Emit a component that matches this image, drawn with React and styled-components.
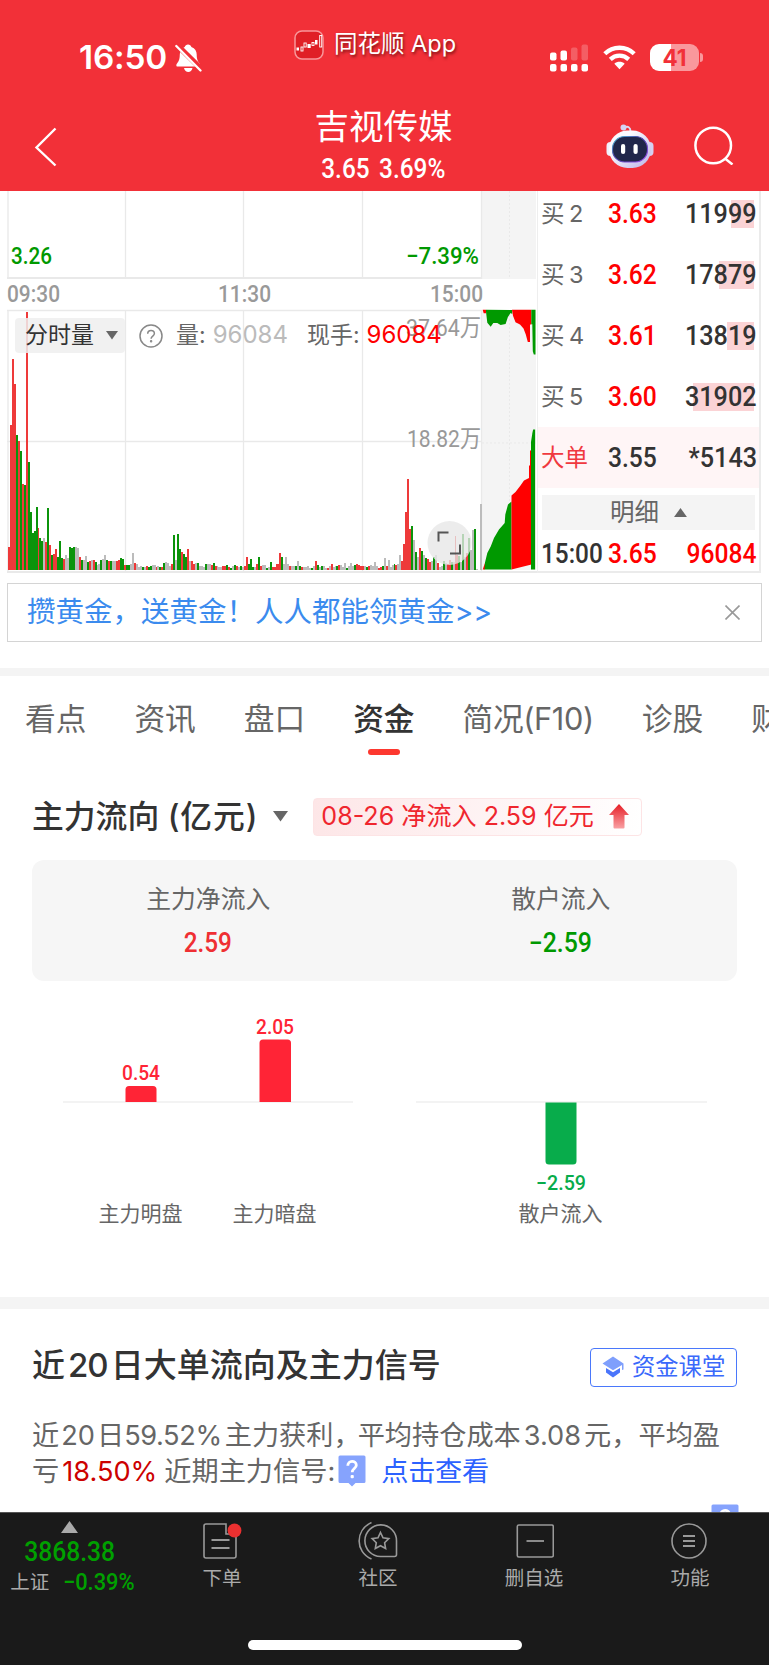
import React from 'react';
import styled, { createGlobalStyle } from 'styled-components';

const GlobalStyle = createGlobalStyle`
  * {
    box-sizing: border-box;
  }

  body {
    margin: 0;
    background: #fff;
    font-family: Inter, 'Noto Sans CJK SC', sans-serif;
    line-height: 1.2;
    color: #333;
  }

  svg {
    display: block;
    flex: none;
  }
`;

const Page = styled.div`
  width: 769px;
  height: 1665px;
  overflow: hidden;
  display: flex;
  flex-direction: column;
  background: #fff;
  white-space: nowrap;
`;

/* condensed digits used for every quote number */
const Num = styled.span`
  display: inline-block;
  margin-top: ${(p) => p.$top || 0}px;
  font-family: Roboto, sans-serif;
  font-weight: 500;
  font-size: ${(p) => p.$size || 27}px;
  line-height: 1;
  word-spacing: ${(p) => p.$gap || 0}px;
  color: ${(p) => p.$color || 'inherit'};
  transform: scaleX(${(p) => p.$stretch || 0.9});
  transform-origin: ${(p) => p.$origin || 'center'};
`;

/* header */

const Header = styled.header`
  height: 191px;
  flex: none;
  background: #f23038;
  color: #fff;
`;

const StatusBar = styled.div`
  display: grid;
  grid-template-columns: 294px 256px 1fr;
  height: 100px;
`;

const Clock = styled.div`
  display: flex;
  align-items: center;
  gap: 8px;
  height: 116px;
  padding-left: 79px;
  font-size: 33.3px;
  font-weight: 600;
  letter-spacing: -0.2px;
`;

const AppTag = styled.div`
  display: flex;
  align-items: center;
  gap: 10px;
  height: 89px;
  font-size: 23.5px;
  text-shadow: 1px 2px 3px rgba(60, 0, 0, 0.65);
`;

const Signals = styled.div`
  display: flex;
  align-items: center;
  height: 115px;
`;

const Battery = styled.div`
  display: flex;
  align-items: center;
  justify-content: center;
  width: 49px;
  height: 27px;
  margin-left: 14px;
  border-radius: 9px;
  background: linear-gradient(to right, #fff 42%, #f9989c 42%);
  color: #f23038;
  font-size: 22.5px;
  font-weight: 700;
`;

const BatteryTip = styled.div`
  width: 3px;
  height: 9px;
  margin-left: 1px;
  border-radius: 0 3px 3px 0;
  background: #f9989c;
`;

const NavBar = styled.div`
  display: grid;
  grid-template-columns: 259px 249px 1fr;
  height: 91px;
`;

const BackSlot = styled.div`
  padding: 27px 0 0 34px;
`;

const TitleBlock = styled.div`
  display: flex;
  flex-direction: column;
  align-items: center;
`;

const StockName = styled.div`
  height: 55px;
  line-height: 54px;
  font-size: 34.5px;
`;

const NavActions = styled.div`
  display: flex;
  padding: 23px 0 0 98px;
  gap: 40px;
`;

/* quote */

const Quote = styled.section`
  display: flex;
  height: 382px;
  flex: none;
  padding-left: 7px;
  overflow: hidden;
`;

const ChartStack = styled.div`
  width: 530px;
  position: relative;
`;

const IndicatorBar = styled.div`
  position: absolute;
  top: 127px;
  left: 8px;
  display: flex;
  align-items: center;
  height: 35px;
  font-size: 23px;
  color: #666;
`;

const IndicatorPicker = styled.div`
  display: flex;
  align-items: center;
  gap: 12px;
  width: 110px;
  height: 35px;
  padding-left: 10px;
  margin-right: 14px;
  border-radius: 4px;
  background: rgba(238, 238, 238, 0.85);
  color: #333;
`;

const Reading = styled.span`
  margin-left: ${(p) => p.$gap}px;
`;

const ReadingValue = styled.span`
  margin-left: 7px;
  font-size: 24px;
  color: ${(p) => p.$color};
`;

const OrderBook = styled.div`
  width: 224px;
  border-left: 1px solid #eee;
  border-right: 2px solid #ebebeb;
  border-bottom: 2px solid #ebebeb;
  display: flex;
  flex-direction: column;
  overflow: hidden;
`;

/* the list is scrolled a little, so its first row starts above the edge */
const OrderList = styled.div`
  flex: none;
  margin-top: -8px;
`;

const OrderRow = styled.div`
  display: grid;
  grid-template-columns: 67px 60px 1fr;
  align-items: center;
  height: ${(p) => p.$height || 61}px;
  padding: ${(p) => p.$top || 0}px 2px 0 3px;
  background: ${(p) => (p.$big ? '#fff5f6' : 'transparent')};
`;

const OrderLabel = styled.span`
  font-size: 23.5px;
  line-height: 30px;
  word-spacing: -2px;
  color: ${(p) => (p.$big ? '#f0393f' : '#666')};
`;

const VolumeCell = styled.span`
  display: flex;
  justify-content: flex-end;
  align-items: center;
  height: 28px;
  background: linear-gradient(#fbd3d5, #fbd3d5) no-repeat right 3px top 0 / ${(p) => p.$fill || 0}px 28px;
`;

const DetailToggle = styled.div`
  display: flex;
  flex: none;
  align-items: center;
  justify-content: center;
  gap: 15px;
  width: 213px;
  height: 35px;
  margin: 7px 0 0 4px;
  background: #f4f4f4;
  color: #666;
  font-size: 24.5px;
`;

const Banner = styled.div`
  display: flex;
  align-items: center;
  justify-content: space-between;
  flex: none;
  width: 755px;
  height: 59px;
  margin: 10px 0 0 7px;
  padding: 0 21px 0 19px;
  border: 1px solid #d4d4d4;
  color: #3b8bee;
  font-size: 28.5px;
`;

const Divider = styled.div`
  flex: none;
  height: ${(p) => p.$height}px;
  margin-top: ${(p) => p.$top}px;
  background: #f4f4f4;
`;

/* tabs */

const Tabs = styled.nav`
  display: flex;
  flex: none;
  gap: 48px;
  height: 84px;
  padding-left: 25px;
  overflow: hidden;
`;

const Tab = styled.div`
  display: flex;
  flex-direction: column;
  align-items: center;
  flex: none;
  line-height: 45px;
  padding-top: 20px;
  font-size: 30.7px;
  letter-spacing: ${(p) => p.$track || 0}px;
  font-weight: ${(p) => (p.$active ? 500 : 400)};
  color: ${(p) => (p.$active ? '#333' : '#666')};

  &::after {
    content: '';
    width: 32px;
    height: 6px;
    margin-top: 8px;
    border-radius: 3px;
    background: ${(p) => (p.$active ? '#fd382f' : 'transparent')};
  }
`;

/* capital flow */

const FlowSection = styled.section`
  flex: none;
  height: 537px;
  padding: 37px 32px 0;
`;

const FlowHead = styled.div`
  display: flex;
  align-items: center;
  height: 39px;
`;

const FlowTitle = styled.h2`
  margin: 0 15px 0 0;
  font-size: 31.8px;
  line-height: 40px;
  font-weight: 500;
  word-spacing: -1px;
`;

const FlowBadge = styled.div`
  display: flex;
  align-items: center;
  justify-content: space-between;
  width: 329px;
  height: 38px;
  margin-left: 25px;
  padding: 0 12px 0 7px;
  border: 1px solid #fde4e5;
  border-radius: 4px;
  background: linear-gradient(100deg, #fde6e7, #fff);
  color: #ef262e;
  font-size: 25.1px;
`;

const Summary = styled.div`
  display: grid;
  grid-template-columns: 1fr 1fr;
  height: 121px;
  margin: 24px 0 20px;
  border-radius: 12px;
  background: #f6f6f6;
`;

const SummaryItem = styled.div`
  display: flex;
  flex-direction: column;
  align-items: center;
  padding-top: 21px;
  gap: 13px;
  line-height: 36px;
  font-size: 24.8px;
  color: #666;
`;

/* signals */

const SignalSection = styled.section`
  flex: none;
  display: flex;
  flex-direction: column;
  height: 203px;
  padding: 38px 32px 0;
  overflow: hidden;
`;

const SignalHead = styled.div`
  display: flex;
  align-items: center;
  justify-content: space-between;
  height: 40px;
`;

const SignalTitle = styled.h2`
  margin: 0;
  padding-bottom: 4px;
  font-size: 33px;
  line-height: 40px;
  font-weight: 500;
`;

const Spaced = styled.span`
  margin: 0 ${(p) => p.$right || 0}px 0 ${(p) => p.$left || 0}px;
  letter-spacing: ${(p) => p.$track || 0}px;
  color: ${(p) => p.$color || 'inherit'};
`;

const LessonButton = styled.div`
  display: flex;
  align-items: center;
  gap: 8px;
  width: 147px;
  height: 39px;
  padding-left: 11px;
  border: 1.5px solid #4a78fb;
  border-radius: 4px;
  color: #3a69fb;
  font-size: 23.3px;
`;

const SignalText = styled.div`
  margin-top: 31px;
  color: #666;
  font-size: 27.2px;
  line-height: 35.5px;
`;

const SignalLine = styled.div`
  display: flex;
  align-items: center;
  height: 35.5px;
`;

const TipRow = styled.div`
  display: flex;
  justify-content: flex-end;
  margin: 15px -2px 0 0;
`;

/* bottom bar */

const BottomBar = styled.footer`
  flex: none;
  height: 153px;
  border-top: 1px solid #555;
  background: #1a1a1a;
  color: #aaa;
`;

const BottomItems = styled.div`
  display: grid;
  grid-template-columns: 144px repeat(4, 156px);
  height: 127px;
`;

const BottomItem = styled.div`
  display: flex;
  flex-direction: column;
  align-items: center;
  gap: 2px;
  padding-top: 8px;
  font-size: 19.5px;
  line-height: 32px;
`;

const IndexItem = styled.div`
  display: flex;
  flex-direction: column;
  align-items: center;
  width: 139px;
  padding-top: 8px;
  font-size: 19.5px;
`;

const IndexRow = styled.div`
  display: flex;
  align-items: center;
  gap: 12px;
  height: 28px;
  margin-top: 3px;
  padding-left: 8px;
`;

const HomeIndicator = styled.div`
  width: 274px;
  height: 10px;
  margin: 0 auto;
  border-radius: 5px;
  background: #fff;
`;

const GRID_X = [1, 118.5, 236.5, 355.5];

// one letter + height per minute: r = up, g = down, n = flat
const VOLUME =
  'r23 r145 r211 r186 g135 r129 g119 r86 g85 r258 g108 g58 g37 g39 g63 r42 g32 g29 n32 r28 ' +
  'g62 r25 g15 r16 r21 g13 g29 g12 r11 n15 n12 g23 g22 g23 n23 n22 r13 g10 n10 n14 ' +
  'g8 r9 n10 r10 g8 n5 n6 g10 n11 n15 g10 r9 g9 n9 n9 r9 r10 g12 g11 r5 ' +
  'g5 g5 n6 n17 r7 n6 n3 n4 g3 n3 r4 g3 g4 n5 n5 r3 n4 g3 r3 g7 ' +
  'n8 n7 n4 r6 g35 n10 g36 g21 r18 g16 g13 r21 n9 r9 r6 n7 g7 n4 n4 n3 ' +
  'g6 n6 n6 r5 g7 r4 n4 n3 n3 r4 r4 g5 r3 g2 n4 g5 r4 n3 g4 n3 ' +
  'r4 r13 g6 g11 g3 n3 r6 g13 r4 n5 n5 g2 n3 g8 r3 r3 r6 r6 r17 g13 ' +
  'n6 n13 n6 r4 n4 n4 g4 n9 g4 r3 n3 n3 n4 n2 g2 n4 r9 g5 n3 g4 ' +
  'n4 n2 r2 n4 r6 n3 n4 g4 r5 n5 n3 n7 g2 n4 n7 n4 g5 r6 r5 r4 ' +
  'r4 n4 g3 r4 n5 n4 n8 n4 r2 r3 g4 n12 r4 n10 n3 n5 g6 r5 n6 n15 ' +
  'r9 r26 r58 r91 r41 g44 n30 g18 n13 r22 g19 n15 g12 r11 r8 n9 g13 n15 r7 n3 ' +
  'n4 g9 n7 r6 r10 g8 n8 r34 r15 g14 n8 g36 n13 r17 g32 n20 n40 g41 n1 n0 n66';

const BARS = VOLUME.split(' ').map((s) => ({ kind: s[0], h: Number(s.slice(1)) }));
const BAR_COLORS = { r: '#ee3a3a', g: '#0b940b', n: '#bcbcbc' };

const ORDERS = [
  { label: '买 2', price: '3.63', volume: '11999', fill: 23 },
  { label: '买 3', price: '3.62', volume: '17879', fill: 35 },
  { label: '买 4', price: '3.61', volume: '13819', fill: 27 },
  { label: '买 5', price: '3.60', volume: '31902', fill: 61 },
  { label: '大单', price: '3.55', volume: '*5143', big: true },
];

function Caret({ size = 12, color = '#666', up }) {
  return (
    <svg width={size} height={size * 0.7} viewBox="0 0 10 7">
      <path d={up ? 'M0 7L5 0L10 7Z' : 'M0 0H10L5 7Z'} fill={color} />
    </svg>
  );
}

function AppLogo() {
  return (
    <svg width="30" height="30" viewBox="0 0 30 30">
      <rect x="1" y="1" width="28" height="28" rx="7" fill="#e01f26" stroke="#f8979a" strokeWidth="1.5" />
      <g fill="#fff">
        <rect x="2.5" y="17.5" width="2.5" height="3" />
        <rect x="13.5" y="14" width="3.2" height="4" />
        <rect x="21" y="10" width="2.5" height="4.5" />
      </g>
      <g fill="none" stroke="#fff" strokeWidth="0.9">
        <rect x="7" y="17" width="2" height="4" />
        <rect x="10" y="13" width="2.2" height="4" />
        <rect x="18" y="12.5" width="2" height="3" />
        <rect x="25.7" y="5.5" width="2" height="11.5" />
      </g>
    </svg>
  );
}

function BellOff() {
  return (
    <svg width="27" height="30" viewBox="0 0 27 30">
      <path
        d="M13 1.5c1.7 0 3 .9 3.4 2.4 3.7 1.3 5.3 4.2 5.3 7.7 0 5 1.2 7 3.3 9.5v2.3H1.800c-.8-.8-.5-2.200.4-3.200 2.200-2.300 2.500-4.800 2.600-8.600 0-3.500 1.500-6.400 4.900-7.700C10.200 2.400 11.500 1.500 13 1.500z"
        fill="#fff"
      />
      <path d="M9 25h8.500c-.5 2.500-2.300 4-4.200 4S9.500 27.500 9 25z" fill="#fff" />
      <path d="M1.500 1.500L27 26.500" stroke="#f23038" strokeWidth="5.500" />
      <path d="M1.300 3L25.500 27.500" stroke="#fff" strokeWidth="2.300" strokeLinecap="round" />
    </svg>
  );
}

function Cellular() {
  return (
    <svg width="38" height="28" viewBox="0 0 38 28">
      <g fill="#fff">
        <rect x="0" y="8.5" width="6.5" height="8" rx="2" />
        <rect x="10.5" y="6.5" width="6.5" height="10" rx="2" />
        {[0, 10.5, 21, 31.5].map((x) => (
          <rect key={x} x={x} y="20" width="6.5" height="7.5" rx="2" />
        ))}
      </g>
      <g fill="#fff" opacity="0.22">
        <rect x="21" y="3.5" width="6.5" height="13" rx="2" />
        <rect x="31.5" y="0.5" width="6.5" height="16" rx="2" />
      </g>
    </svg>
  );
}

const WifiIcon = styled.svg`
  margin-left: 15px;
`;

function Wifi() {
  return (
    <WifiIcon width="33" height="25" viewBox="0 0 33 25">
      <g fill="none" stroke="#fff" strokeWidth="4.3">
        <path d="M1.8 8.8C10 .7 23 .7 31.2 8.8" />
        <path d="M7.3 14.4c5.300-5 13.100-5 18.400 0" />
      </g>
      <path d="M11.3 18.8c3-2.600 7.400-2.600 10.400 0L16.500 24.300Z" fill="#fff" />
    </WifiIcon>
  );
}

function Robot() {
  return (
    <svg width="48" height="46" viewBox="0 0 48 46">
      <defs>
        <linearGradient id="shell" x1="0" y1="0" x2="1" y2="1">
          <stop offset="0.3" stopColor="#fbfaff" />
          <stop offset="1" stopColor="#b9b2e6" />
        </linearGradient>
        <linearGradient id="visor" x1="0" y1="0" x2="1" y2="1">
          <stop offset="0" stopColor="#55d0e0" />
          <stop offset="0.4" stopColor="#4a45a8" />
          <stop offset="1" stopColor="#9a4df0" />
        </linearGradient>
      </defs>
      <path d="M18 4.5c4-1.500 6.500-.5 6.500 4" fill="none" stroke="#dcd9f4" strokeWidth="2" />
      <circle cx="17.5" cy="4.5" r="3" fill="#d5d3f3" />
      <rect x="0.5" y="19" width="8" height="14" rx="4" fill="#f1effb" />
      <rect x="39.5" y="19" width="8" height="14" rx="4" fill="#d5d0f0" />
      <rect x="3" y="7.5" width="42" height="37.5" rx="18.5" fill="url(#shell)" />
      <rect x="6.5" y="13.5" width="35" height="25.5" rx="12" fill="#20264a" stroke="url(#visor)" strokeWidth="1.1" />
      <rect x="15" y="21" width="4.2" height="10" rx="2.1" fill="#fff" />
      <rect x="27.5" y="21" width="4.2" height="10" rx="2.1" fill="#fff" />
    </svg>
  );
}

function SearchIcon() {
  return (
    <svg width="42" height="42" viewBox="0 0 42 42" fill="none" stroke="#fff" strokeWidth="2.5">
      <circle cx="19.2" cy="22.5" r="17.8" />
      <path d="M31 35.5l7.500 6" />
    </svg>
  );
}

function MinuteChart() {
  return (
    <svg width="530" height="382" viewBox="0 0 530 382">
      <rect x="475" y="0" width="54" height="88" fill="#f4f4f4" />
      <rect x="475" y="119" width="54" height="260" fill="#f4f4f4" />
      <g stroke="#e9e9e9" strokeWidth="1.3">
        {GRID_X.map((x) => (
          <path key={x} d={`M${x} 0V87M${x} 120V381`} />
        ))}
        <path d="M474.5 0V88M474.5 120V381" />
        <path d="M0 119.5H475M0 250.5H475" />
        <path d="M0 87H475M0 381H530" strokeWidth="2" />
        <path d="M502.5 0V88M502.5 120V379M475 252H529" strokeDasharray="2 2" strokeWidth="1" />
      </g>

      <g shapeRendering="crispEdges">
        {BARS.map((bar, i) => (
          <rect
            key={i}
            x={1 + i * 1.967}
            y={378.5 - bar.h}
            width="1.967"
            height={bar.h}
            fill={BAR_COLORS[bar.kind]}
          />
        ))}
      </g>

      {/* bid depth, hanging from the top */}
      <path d="M475.7 118.7h3.300v3.600h-2.300z" fill="#f00" />
      <path
        d="M479 118.700v2l1.300 11 3.400 4 2.600-3.700 4 0 3.300 2 5-1 2.300-7 2.700-4 1.600 1v-4z"
        fill="#090"
      />
      <path d="M505 118.700l1 6 2.500 6.500 4.500 2.300 3.500 4 2.300 6 2 7.500h2.200v-17.500h1.300v-14.800z" fill="#f00" />
      <path d="M524.300 118.700v14.500h1l.5 27 1 3.300h1.700v-44.800z" fill="#090" />

      {/* ask depth, rising from the bottom */}
      <path d="M475.700 378.500l2.300-6.500v6.500z" fill="#f00" />
      <path
        d="M477.500 378.500l.5-7 2.300-9.500 3.400-6.500 3.300-8.500 5-8.500 5.700-6.500.6-8.500 2.700-10 3.500-3v68z"
        fill="#090"
      />
      <path d="M504.500 378.500v-74l4-3.500 5-6.500 3.500-5 5-2.500v-12.500h1v-15h1.500v114z" fill="#f00" />
      <path d="M524 378.500v-127.500l1.300-8.500.8-4h2v140z" fill="#090" />

      <g fontFamily="Roboto, 'Noto Sans CJK SC', sans-serif" fontSize="24" fill="#999">
        <text x="4" y="73" fill="#090" fontWeight="500" fontSize="23" textLength="41" lengthAdjust="spacingAndGlyphs">3.26</text>
        <text x="399" y="73" fill="#090" fontWeight="500" fontSize="23" textLength="73" lengthAdjust="spacingAndGlyphs">−7.39%</text>
        <g fontWeight="500" fontSize="23.500">
          <text x="0" y="110.5" textLength="53" lengthAdjust="spacingAndGlyphs">09:30</text>
          <text x="211" y="110.5" textLength="53" lengthAdjust="spacingAndGlyphs">11:30</text>
          <text x="423" y="110.5" textLength="53" lengthAdjust="spacingAndGlyphs">15:00</text>
        </g>
        <text x="399" y="145" textLength="75" lengthAdjust="spacingAndGlyphs">37.64万</text>
        <text x="400" y="255.5" textLength="74" lengthAdjust="spacingAndGlyphs">18.82万</text>
      </g>

      <circle cx="442.5" cy="352" r="22" fill="#e7e7e7" fillOpacity="0.78" />
      <path d="M431.5 350.5v-9h10M453 353.500v9h-10" fill="none" stroke="#555" strokeWidth="2" />
    </svg>
  );
}

function HelpCircle() {
  return (
    <svg width="24" height="24" viewBox="0 0 24 24" fill="none" stroke="#888" strokeWidth="1.5">
      <circle cx="12" cy="12" r="11" />
      <path d="M8.7 9.7c0-4.300 6.700-4.300 6.700-.2 0 2.500-3.300 2.600-3.300 5.200" />
      <circle cx="12.1" cy="17.3" r="0.5" fill="#888" />
    </svg>
  );
}

function ArrowUp() {
  return (
    <svg width="20" height="25" viewBox="0 0 20 25">
      <defs>
        <linearGradient id="arrow" x1="0" y1="0" x2="0" y2="1">
          <stop offset="0" stopColor="#e61e26" />
          <stop offset="1" stopColor="#f9a0a3" />
        </linearGradient>
      </defs>
      <path d="M10 0L20 11H15.500V23.500Q15.500 24.500 14.500 24.500H5.500Q4.500 24.500 4.500 23.500V11H0Z" fill="url(#arrow)" />
    </svg>
  );
}

function FlowChart() {
  return (
    <svg width="705" height="240" viewBox="0 0 705 240">
      <path d="M31 101H321M384 101H675" stroke="#f0f0f0" strokeWidth="1.5" />
      <path d="M93.500 101V88.500q0-3.500 3.500-3.500h24q3.500 0 3.500 3.500V101z" fill="#ff2436" />
      <path d="M227.500 101V42q0-3.500 3.500-3.500h24.500q3.500 0 3.500 3.500V101z" fill="#ff2436" />
      <path d="M513.500 101.500v58.500q0 3.500 3.500 3.500h24q3.500 0 3.500-3.500v-58.500z" fill="#08ac4b" />
      <g fontFamily="Roboto, sans-serif" fontWeight="500" fontSize="20.5" textAnchor="middle">
        <text x="109" y="79" fill="#ff2436" textLength="38" lengthAdjust="spacingAndGlyphs">0.54</text>
        <text x="243" y="32.5" fill="#ff2436" textLength="38" lengthAdjust="spacingAndGlyphs">2.05</text>
        <text x="529" y="189" fill="#08ac4b" textLength="50" lengthAdjust="spacingAndGlyphs">−2.59</text>
      </g>
      <g fontFamily="'Noto Sans CJK SC', sans-serif" fontSize="21" fill="#666" textAnchor="middle">
        <text x="108.5" y="220">主力明盘</text>
        <text x="242.5" y="220">主力暗盘</text>
        <text x="528.5" y="220">散户流入</text>
      </g>
    </svg>
  );
}

function HatIcon() {
  return (
    <svg width="22" height="22" viewBox="0 0 22 22">
      <path d="M11 0.5L21.5 7.5V13.500L20 14V9L11 14.300L.5 7.500Z" fill="#7f9ffc" />
      <path d="M4 12L11 16.300L18 12V16.500L11 21.500L4 16.500Z" fill="#4a75fb" />
    </svg>
  );
}

function TipFlag() {
  return (
    <svg width="28" height="32" viewBox="0 0 28 32">
      <path d="M2 .5H26Q27.5 .5 27.5 2V26.500Q27.500 28 26 28H17.500L14 31.500L10.500 28H2Q.5 28 .5 26.500V2Q.5 .5 2 .5Z" fill="#86a3fd" />
      <path d="M9.800 10.800c0-6 8.500-5.800 8.500-.6 0 3.300-4.100 3.400-4.100 7" fill="none" stroke="#fff" strokeWidth="2.8" />
      <rect x="12.6" y="20" width="3.2" height="3.2" rx="1" fill="#fff" />
    </svg>
  );
}

function OrderIcon() {
  return (
    <svg width="40" height="39" viewBox="1 0 40 39" fill="none" stroke="#999" strokeWidth="1.6">
      <path d="M25 3H5q-2 0-2 2V35q0 2 2 2H33q2 0 2-2V13H25Z" />
      <path d="M10.5 19h18M10.5 27h18" strokeWidth="2" />
      <circle cx="33.5" cy="9.5" r="6.9" fill="#eb3030" stroke="none" />
    </svg>
  );
}

function CommunityIcon() {
  return (
    <svg width="40" height="39" viewBox="0 0 40 39" fill="none" stroke="#999" strokeWidth="1.6">
      <path d="M13.5 1.5C-3 9-3 31 13.500 38" />
      <path d="M38.5 20V33.500q0 2-2 2H22.500A15.800 15.800 0 1 1 38.500 20Z" />
      <path d="M22.5 11.5l2.500 5.300 5.800.8-4.200 4.100 1 5.800-5.100-2.800-5.200 2.800 1-5.800-4.200-4.100 5.900-.8z" />
    </svg>
  );
}

function RemoveIcon() {
  return (
    <svg width="40" height="39" viewBox="0 0 40 39" fill="none" stroke="#999" strokeWidth="1.6">
      <rect x="3.300" y="4" width="36" height="32" rx="1.5" />
      <path d="M12.500 20h17.500" strokeWidth="1.8" />
    </svg>
  );
}

function MenuIcon() {
  return (
    <svg width="40" height="39" viewBox="0 0 40 39" fill="none" stroke="#999" strokeWidth="1.6">
      <circle cx="19" cy="20" r="17" />
      <path d="M13 15h12M13 20h12M13 25h12" strokeWidth="1.8" />
    </svg>
  );
}

function App() {
  return (
    <Page>
      <GlobalStyle />

      <Header>
        <StatusBar>
          <Clock>
            16:50
            <BellOff />
          </Clock>
          <AppTag>
            <AppLogo />
            同花顺 App
          </AppTag>
          <Signals>
            <Cellular />
            <Wifi />
            <Battery>41</Battery>
            <BatteryTip />
          </Signals>
        </StatusBar>
        <NavBar>
          <BackSlot>
            <svg width="23" height="40" viewBox="0 0 23 40" fill="none" stroke="#fff" strokeWidth="2.4">
              <path d="M21.5 1.5L2.5 20.5L21.5 38.5" />
            </svg>
          </BackSlot>
          <TitleBlock>
            <StockName>吉视传媒</StockName>
            <Num $stretch={0.87} $size={28} $gap={4}>3.65 3.69%</Num>
          </TitleBlock>
          <NavActions>
            <Robot />
            <SearchIcon />
          </NavActions>
        </NavBar>
      </Header>

      <Quote>
        <ChartStack>
          <MinuteChart />
          <IndicatorBar>
            <IndicatorPicker>
              分时量
              <Caret />
            </IndicatorPicker>
            <HelpCircle />
            <Reading $gap={13}>量:</Reading>
            <ReadingValue $color="#bbb">96084</ReadingValue>
            <Reading $gap={19}>现手:</Reading>
            <ReadingValue $color="#f00">96084</ReadingValue>
          </IndicatorBar>
        </ChartStack>
        <OrderBook>
          <OrderList>
            {ORDERS.map((o) => (
              <OrderRow key={o.label} $big={o.big}>
                <OrderLabel $big={o.big}>{o.label}</OrderLabel>
                <Num $size={28} $stretch={0.88} $origin="left" $color={o.big ? '#333' : '#f00'}>
                  {o.price}
                </Num>
                <VolumeCell $fill={o.fill}>
                  <Num $size={28} $stretch={0.9} $origin="right">{o.volume}</Num>
                </VolumeCell>
              </OrderRow>
            ))}
          </OrderList>
          <DetailToggle>
            明细
            <Caret size={13} up />
          </DetailToggle>
          <OrderRow $height={40} $top={8}>
            <Num $size={28} $stretch={0.87} $origin="left">15:00</Num>
            <Num $size={28} $stretch={0.88} $origin="left" $color="#f00">3.65</Num>
            <VolumeCell>
              <Num $size={28} $stretch={0.88} $origin="right" $color="#f00">96084</Num>
            </VolumeCell>
          </OrderRow>
        </OrderBook>
      </Quote>

      <Banner>
        <span>攒黄金，送黄金！人人都能领黄金&gt;&gt;</span>
        <svg width="15" height="15" viewBox="0 0 15 15" stroke="#999" strokeWidth="1.6">
          <path d="M.5 .5L14.5 14.5M14.5 .5L.5 14.5" />
        </svg>
      </Banner>

      <Divider $top={26} $height={8} />

      <Tabs>
        <Tab>看点</Tab>
        <Tab>资讯</Tab>
        <Tab>盘口</Tab>
        <Tab $active>资金</Tab>
        <Tab $track={-0.35}>简况(F10)</Tab>
        <Tab>诊股</Tab>
        <Tab>财务</Tab>
      </Tabs>

      <FlowSection>
        <FlowHead>
          <FlowTitle>
            主力流向 <Spaced $left={1} $track={0.9}>(亿元)</Spaced>
          </FlowTitle>
          <Caret size={15} />
          <FlowBadge>
            08-26 净流入 2.59 亿元
            <ArrowUp />
          </FlowBadge>
        </FlowHead>
        <Summary>
          <SummaryItem>
            主力净流入
            <Num $color="#ef2f33">2.59</Num>
          </SummaryItem>
          <SummaryItem>
            散户流入
            <Num $color="#090" $stretch={0.92}>−2.59</Num>
          </SummaryItem>
        </Summary>
        <FlowChart />
      </FlowSection>

      <Divider $top={0} $height={12} />

      <SignalSection>
        <SignalHead>
          <SignalTitle>
            近<Spaced $left={3} $right={3} $track={-1}>20</Spaced>日大单流向及主力信号
          </SignalTitle>
          <LessonButton>
            <HatIcon />
            资金课堂
          </LessonButton>
        </SignalHead>
        <SignalText>
          <SignalLine>
            近<Spaced $left={2} $right={2}>20</Spaced>日<Spaced $track={-0.4}>59.52%</Spaced>
            <Spaced $left={3}>主力获利，</Spaced>
            <Spaced $left={-3}>平均持仓成本</Spaced>
            <Spaced $left={3} $right={3}>3.08</Spaced>元，平均盈
          </SignalLine>
          <SignalLine>
            亏<Spaced $color="#c00" $left={3} $right={7}>18.50%</Spaced>近期主力信号:
            <Spaced $left={3} $right={15}><TipFlag /></Spaced>
            <Spaced $color="#2c62ff" $track={-0.3}>点击查看</Spaced>
          </SignalLine>
        </SignalText>
        <TipRow>
          <TipFlag />
        </TipRow>
      </SignalSection>

      <BottomBar>
        <BottomItems>
          <IndexItem>
            <Caret size={17} up color="#aaa" />
            <Num $size={28} $stretch={0.88} $color="#00a000" $top={5}>3868.38</Num>
            <IndexRow>
              上证
              <Num $size={23} $stretch={0.95} $color="#00a000">−0.39%</Num>
            </IndexRow>
          </IndexItem>
          <BottomItem>
            <OrderIcon />
            下单
          </BottomItem>
          <BottomItem>
            <CommunityIcon />
            社区
          </BottomItem>
          <BottomItem>
            <RemoveIcon />
            删自选
          </BottomItem>
          <BottomItem>
            <MenuIcon />
            功能
          </BottomItem>
        </BottomItems>
        <HomeIndicator />
      </BottomBar>
    </Page>
  );
}

export default App;
